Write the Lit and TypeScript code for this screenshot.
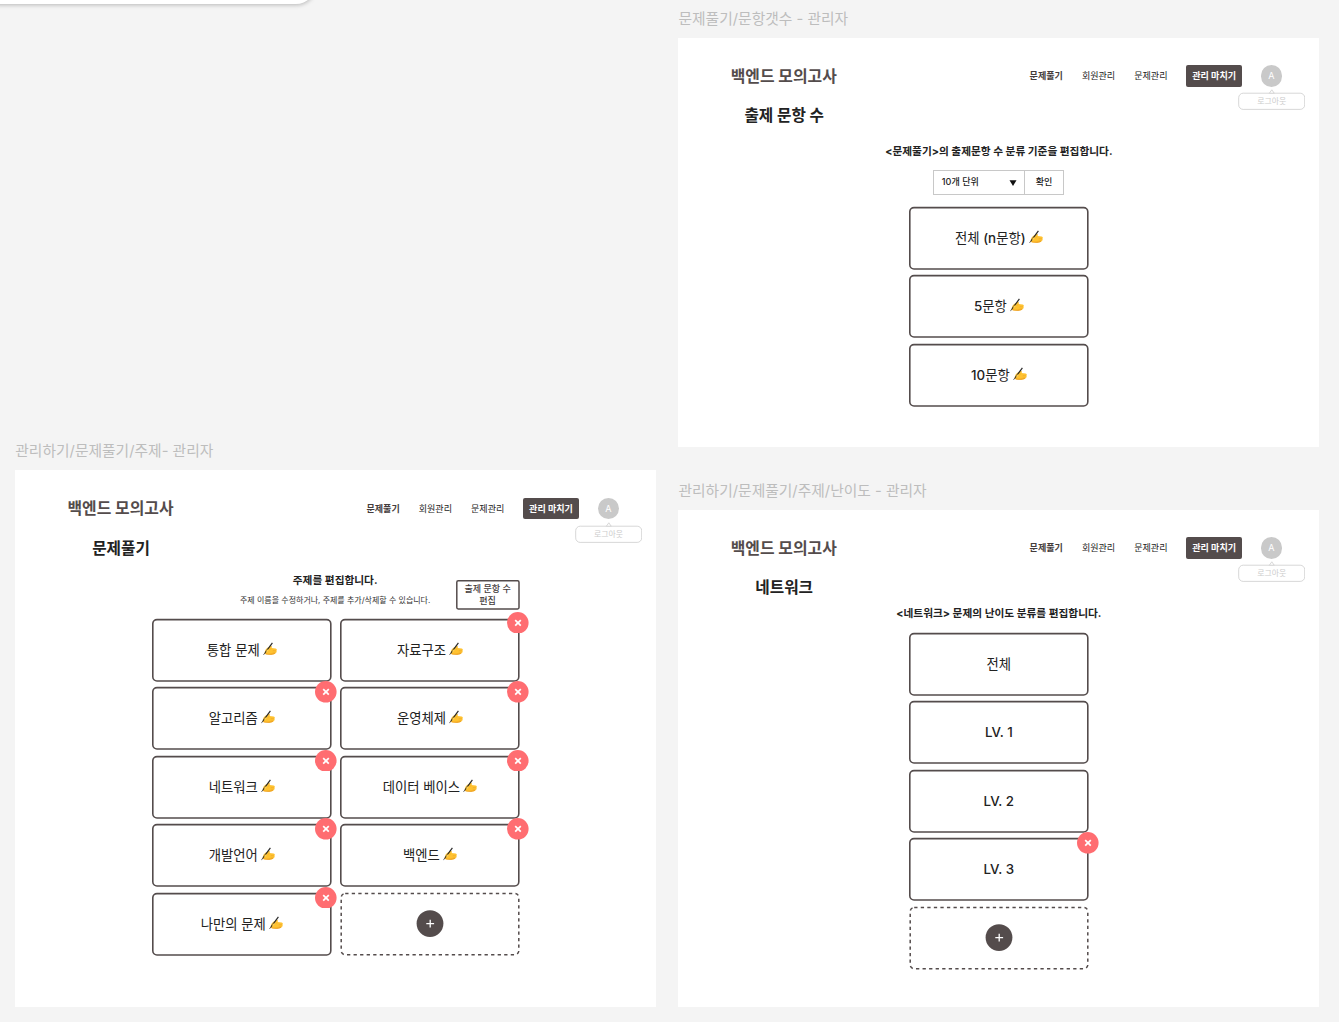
import { LitElement, html, css, svg, nothing } from "lit";
import { customElement, property } from "lit/decorators.js";
import { classMap } from "lit/directives/class-map.js";

interface Tile {
  text: string;
  edit?: boolean;
  remove?: boolean;
}

const base = css`
  * {
    box-sizing: border-box;
  }
  :host {
    font-family: Inter, "Noto Sans CJK KR", sans-serif;
    color: #222;
  }
`;

const pencilHand = svg`
  <path d="M1.7 10.4 C2 8.4 2.8 7 4.4 5.8 L7.2 4.2 C8.4 3.6 9.4 4.4 8.8 5.4 L8.4 6 L12.6 6.6 C14 6.8 14.2 8.5 13.3 8.8 C14 9.6 13.6 10.6 12.7 10.8 C12.5 11.8 11.6 12.1 10.8 12.2 C8.6 12.7 5.2 12.7 3.4 12.5 C2 12.3 1.5 11.6 1.7 10.4Z" fill="#ffc230"/>
  <path d="M2.4 12 C5 13.1 9.6 13 11.6 12 L12.3 11.1 C9.6 12 5.6 12.2 1.8 11.2 Z" fill="#eb9a1c"/>
  <path d="M8.2 6.4 L6.9 7.6 M9.8 8.4 L13 8.8 M9.6 10 L12.4 10.5" stroke="#e9a125" stroke-width="0.45" fill="none"/>
  <path d="M8.9 0.4 L9.9 1.2 L3.6 9.7 L0.5 13.2 L0.2 13 L2.5 9.3 Z" fill="#2b2b2b"/>
  <path d="M3.2 8.8 C4 7.6 5.4 7.1 5.9 7.8 C5.6 9 4.8 9.9 3.6 10.4 Z" fill="#ffcd4a"/>
`;

const renderText = (text: string) =>
  (text.match(/[\x20-\x7e]+|[^\x20-\x7e]+/g) ?? []).map((run) =>
    /[\x21-\x7e]/.test(run) ? html`<span class="latin">${run}</span>` : run,
  );

@customElement("choice-tile")
export class ChoiceTile extends LitElement {
  @property({ attribute: false }) tile?: Tile;

  static styles = [
    base,
    css`
      :host {
        display: block;
        height: 63px;
      }
      .tile {
        position: relative;
        height: 100%;
        display: flex;
        align-items: center;
        justify-content: center;
        gap: 3px;
        padding-bottom: 1px;
        font-size: 13.35px;
        line-height: 20px;
        white-space: nowrap;
      }
      .text {
        position: relative;
        white-space: pre;
      }
      .latin {
        font-weight: 500;
      }
      .outline {
        position: absolute;
        inset: 0;
        width: 100%;
        height: 100%;
        overflow: visible;
      }
      .hand {
        position: relative;
        width: 14px;
        height: 13.5px;
        margin-top: -2.5px;
      }
      .dashed {
        width: 100%;
        height: 100%;
        display: block;
        overflow: visible;
      }
      .badge {
        position: absolute;
        top: var(--badge-top, -6px);
        right: var(--badge-right, -10px);
        width: 21.6px;
        height: 21.6px;
      }
    `,
  ];

  render() {
    const tile = this.tile;
    if (!tile) {
      return html`
        <svg class="dashed" viewBox="0 0 179.5 63">
          <rect x="1.2" y="0.5" width="177.6" height="61.2" rx="4" fill="none"
            stroke="#544c4c" stroke-width="1.5" stroke-dasharray="3.3 3.25" />
          <circle cx="90" cy="30.6" r="13.4" fill="#544c4c" />
          <path d="M90.2 26.8v7.8M86.3 30.7h7.8" stroke="#fff" stroke-width="1.3" />
        </svg>
      `;
    }
    return html`
      <div class="tile">
        <svg class="outline" viewBox="0 0 179.5 63" preserveAspectRatio="none">
          <rect x="0.8" y="0.6" width="178" height="61.4" rx="4.2" fill="#fff"
            stroke="#544c4c" stroke-width="1.6" />
        </svg>
        <span class="text">${renderText(tile.text)}</span>
        ${tile.edit
          ? html`<svg class="hand" viewBox="0 0 14 13.5">${pencilHand}</svg>`
          : nothing}
        ${tile.remove
          ? html`<svg class="badge" viewBox="0 0 21.6 21.6">
              <circle cx="10.8" cy="10.8" r="10.8" fill="#ff6d71" />
              <path d="M8.2 8.1l5.6 5.6M13.8 8.1l-5.6 5.6" stroke="#fff" stroke-width="1.7" />
            </svg>`
          : nothing}
      </div>
    `;
  }
}

@customElement("admin-header")
export class AdminHeader extends LitElement {
  static styles = [
    base,
    css`
      :host {
        display: flex;
        align-items: center;
        height: 22px;
        padding: 0 37.3px 0 52.5px;
        color: #544c4c;
      }
      .logo {
        margin-right: auto;
        font-size: 15.9px;
        font-weight: 700;
        line-height: 21px;
        white-space: nowrap;
      }
      .nav {
        display: flex;
        align-items: center;
        gap: 19px;
        font-size: 9.05px;
        line-height: 14px;
        white-space: nowrap;
        color: #222;
      }
      .last {
        margin-right: -0.8px;
      }
      .current {
        font-weight: 700;
        color: #443c3c;
      }
      .finish {
        width: 56px;
        height: 21.5px;
        padding-left: 1px;
        line-height: 21px;
        text-align: center;
        border-radius: 2px;
        background: #544c4c;
        color: #fff;
        font-weight: 700;
      }
      .account {
        position: relative;
        width: 21.5px;
        height: 21.5px;
        border-radius: 50%;
        background: #c9c9c9;
        color: #fff;
        text-align: center;
        line-height: 22px;
      }
      .bubble {
        position: absolute;
        top: 24px;
        left: -23px;
        width: 67.5px;
        height: 21px;
        display: block;
      }
      .logout {
        position: absolute;
        top: 28px;
        left: -22.5px;
        width: 67px;
        font-size: 7.9px;
        line-height: 16px;
        color: #ccc;
      }
    `,
  ];

  render() {
    return html`
      <div class="logo">백엔드 모의고사</div>
      <div class="nav">
        <span class="current">문제풀기</span>
        <span>회원관리</span>
        <span class="last">문제관리</span>
        <span class="finish">관리 마치기</span>
        <div class="account">
          A
          <svg class="bubble" viewBox="0 0 67.5 21" fill="none" stroke="#d2d2d2" stroke-width="0.9">
            <rect x="0.7" y="4.2" width="66" height="16.2" rx="4.5" />
            <path d="M31.4 4.2L33.8 0.8L36.2 4.2Z" fill="#fff" />
          </svg>
          <span class="logout">로그아웃</span>
        </div>
      </div>
    `;
  }
}

@customElement("admin-screen")
export class AdminScreen extends LitElement {
  @property() label = "";
  @property() heading = "";
  @property() lead = "";
  @property() note = "";
  @property() kind = "";
  @property({ attribute: false }) tiles: Tile[] = [];

  static styles = [
    base,
    css`
      :host {
        display: flex;
        flex-direction: column;
        width: 641.3px;
      }
      .label {
        height: 32px;
        padding: 1px 0 0 0.3px;
        font-size: 14.75px;
        line-height: 24px;
        color: #bdbdbd;
        white-space: nowrap;
      }
      .frame {
        flex: 1;
        padding-top: 27.5px;
        background: #fff;
      }
      .heading {
        width: 212px;
        margin-top: 18px;
        font-size: 15.7px;
        font-weight: 700;
        line-height: 22px;
        text-align: center;
      }
      .intro {
        position: relative;
        display: flex;
        flex-direction: column;
        align-items: center;
        text-align: center;
        white-space: nowrap;
      }
      .lead {
        font-size: 10.7px;
        font-weight: 700;
        line-height: 16px;
      }
      .note {
        margin-top: 5px;
        font-size: 8px;
        line-height: 12px;
        color: #333;
      }
      .counts .intro {
        margin-top: 17px;
      }
      .levels .intro {
        margin-top: 7px;
      }
      .topics .intro {
        margin-top: 13px;
        height: 46px;
        padding-right: 1px;
      }
      .count-edit {
        position: absolute;
        top: 7px;
        right: 136.7px;
        width: 64px;
        height: 30px;
        padding-top: 3px;
        font-size: 9.05px;
        font-weight: 500;
        line-height: 12px;
        color: #443c3c;
      }
      .count-edit svg {
        position: absolute;
        inset: 0;
      }
      .picker {
        display: flex;
        width: 131px;
        height: 25.5px;
        margin: 9.5px auto 0;
        border: 1px solid #c8c8c8;
        font-size: 9.05px;
        font-weight: 500;
        line-height: 22px;
        white-space: nowrap;
      }
      .unit {
        flex: 1;
        display: flex;
        align-items: center;
        justify-content: space-between;
        padding: 0 6.5px 0 7.5px;
        border-right: 1px solid #c8c8c8;
      }
      .arrow {
        width: 8px;
        height: 7px;
      }
      .confirm {
        width: 38.5px;
        text-align: center;
      }
      .tiles {
        display: grid;
        grid-template-columns: 179.5px;
        justify-content: center;
        row-gap: 5.5px;
        margin-top: 11.6px;
      }
      .levels .tiles {
        margin-top: 10.8px;
      }
      .topics .tiles {
        grid-template-columns: 179.5px 179.5px;
        column-gap: 8.7px;
        justify-content: start;
        margin: 0 0 0 137px;
      }
      .topics choice-tile {
        --badge-right: -9px;
      }
      .topics choice-tile:nth-child(odd) {
        --badge-right: -5px;
      }
      .topics choice-tile:nth-child(2) {
        --badge-top: -7px;
      }
    `,
  ];

  render() {
    return html`
      <div class="label">${this.label}</div>
      <div class=${classMap({ frame: true, [this.kind]: true })}>
        <admin-header></admin-header>
        <div class="heading">${this.heading}</div>
        <div class="intro">
          <div class="lead">${this.lead}</div>
          ${this.note ? html`<div class="note">${this.note}</div>` : nothing}
          ${this.kind === "topics"
            ? html`<div class="count-edit">
                <svg width="64" height="30" viewBox="0 0 64 30">
                  <rect x="0.8" y="0.8" width="62.2" height="28.2" rx="1.4" fill="none"
                    stroke="#544c4c" stroke-width="1.5" />
                </svg>
                출제 문항 수<br />편집
              </div>`
            : nothing}
        </div>
        ${this.kind === "counts"
          ? html`<div class="picker">
              <div class="unit">
                10개 단위
                <svg class="arrow" viewBox="0 0 8 7"><path d="M0.5 1.2h7L4 7z" fill="#111" /></svg>
              </div>
              <div class="confirm">확인</div>
            </div>`
          : nothing}
        <div class="tiles">
          ${this.tiles.map((t) => html`<choice-tile .tile=${t}></choice-tile>`)}
          ${this.kind === "counts" ? nothing : html`<choice-tile></choice-tile>`}
        </div>
      </div>
    `;
  }
}

const COUNTS: Tile[] = ["전체 (n문항)", "5문항", "10문항"].map((text) => ({ text, edit: true }));

const TOPICS: Tile[] = [
  "통합 문제",
  "자료구조",
  "알고리즘",
  "운영체제",
  "네트워크",
  "데이터 베이스",
  "개발언어",
  "백엔드",
  "나만의 문제",
].map((text, i) => ({ text, edit: true, remove: i > 0 }));

const LEVELS: Tile[] = [
  { text: "전체" },
  { text: "LV. 1" },
  { text: "LV. 2" },
  { text: "LV. 3", remove: true },
];

@customElement("app-root")
export class AppRoot extends LitElement {
  static styles = [
    base,
    css`
      :host {
        display: block;
      }
      .canvas {
        position: relative;
        width: 1339px;
        height: 1022px;
        overflow: hidden;
        background: #f4f4f4;
      }
      .panel {
        position: absolute;
        left: -20px;
        top: -56px;
        width: 336px;
        height: 60px;
        border-radius: 20px;
        background: #fff;
        box-shadow: 0 1px 4px rgba(0, 0, 0, 0.25);
      }
      .counts,
      .topics,
      .levels {
        position: absolute;
      }
      .counts {
        left: 678.2px;
        top: 5.5px;
        height: 441.5px;
      }
      .topics {
        left: 15px;
        top: 438px;
        height: 569.2px;
      }
      .levels {
        left: 678.2px;
        top: 477.5px;
        height: 529.8px;
      }
    `,
  ];

  render() {
    return html`
      <div class="canvas">
        <div class="panel"></div>
        <admin-screen
          class="counts"
          kind="counts"
          label="문제풀기/문항갯수 - 관리자"
          heading="출제 문항 수"
          lead="<문제풀기>의 출제문항 수 분류 기준을 편집합니다."
          .tiles=${COUNTS}
        ></admin-screen>
        <admin-screen
          class="topics"
          kind="topics"
          label="관리하기/문제풀기/주제- 관리자"
          heading="문제풀기"
          lead="주제를 편집합니다."
          note="주제 이름을 수정하거나, 주제를 추가/삭제할 수 있습니다."
          .tiles=${TOPICS}
        ></admin-screen>
        <admin-screen
          class="levels"
          kind="levels"
          label="관리하기/문제풀기/주제/난이도 - 관리자"
          heading="네트워크"
          lead="<네트워크> 문제의 난이도 분류를 편집합니다."
          .tiles=${LEVELS}
        ></admin-screen>
      </div>
    `;
  }
}
